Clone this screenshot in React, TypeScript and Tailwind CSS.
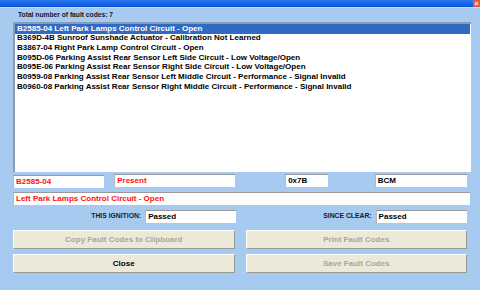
const CODES = [
  'B2585-04 Left Park Lamps Control Circuit - Open',
  'B369D-4B Sunroof Sunshade Actuator - Calibration Not Learned',
  'B3867-04 Right Park Lamp Control Circuit - Open',
  'B095D-06 Parking Assist Rear Sensor Left Side Circuit - Low Voltage/Open',
  'B095E-06 Parking Assist Rear Sensor Right Side Circuit - Low Voltage/Open',
  'B0959-08 Parking Assist Rear Sensor Left Middle Circuit - Performance - Signal Invalid',
  'B0960-08 Parking Assist Rear Sensor Right Middle Circuit - Performance - Signal Invalid',
]

function Field({ value, red, className }: { value: string; red?: boolean; className: string }) {
  return (
    <div
      className={`flex h-[13px] items-center border-t border-l border-t-[#9a9a9a] border-l-[#b8b8b8] bg-white pl-[2px] text-[8px] leading-none ${
        red ? 'text-[#ff1010]' : 'text-black'
      } ${className}`}
    >
      {value}
    </div>
  )
}

function Button({ label, disabled }: { label: string; disabled?: boolean }) {
  return (
    <div
      className={`flex h-[19px] w-[224px] items-center justify-center border-t border-l border-r border-b border-t-white border-l-white border-r-[#9c9a94] border-b-[#9c9a94] bg-[#ece9d8] text-[8px] ${
        disabled ? 'text-[#a8a69c]' : 'text-black'
      }`}
    >
      {label}
    </div>
  )
}

export default function App() {
  return (
    <div
      className="flex h-[290px] w-[480px] flex-col overflow-hidden bg-[#a6caf0] font-bold"
      style={{ fontFamily: '"Liberation Sans", Arial, sans-serif' }}
    >
      {/* title bar */}
      <div className="flex h-[7px] justify-end bg-gradient-to-b from-[#2a78f0] to-[#0a52dc]">
        <div className="flex h-[7px] w-[7px] items-center justify-center bg-[#e2583e] text-[7px] leading-none text-white">
          ×
        </div>
      </div>
      <div className="h-[1px] bg-[#c6dcf6]" />

      <div className="flex h-[14px] items-center pl-[18px] text-[6.7px] leading-none text-[#101828]">
        Total number of fault codes: 7
      </div>

      <div className="mx-[13px] h-[150px] w-[458px] border-t-2 border-l-2 border-t-[#8a9cb4] border-l-[#8a9cb4] bg-white">
        {CODES.map((c, i) => (
          <div
            key={c}
            className={`flex h-[9.67px] items-center pl-[2px] text-[8px] leading-none whitespace-nowrap ${
              i === 0 ? 'mr-[1px] bg-[#316ac5] text-white' : 'text-black'
            }`}
          >
            {c}
          </div>
        ))}
      </div>

      <div className="mt-[2px] flex items-start px-[13px]">
        <Field value="B2585-04" red className="mt-[1px] w-[92px]" />
        <Field value="Present" red className="ml-[10px] w-[122px]" />
        <Field value="0x7B" className="ml-[50px] w-[43px]" />
        <Field value="BCM" className="ml-[47px] w-[93px]" />
      </div>

      <div className="mt-[4px] px-[13px]">
        <Field value="Left Park Lamps Control Circuit - Open" red className="w-[457px]" />
      </div>

      <div className="mt-[5px] flex items-center px-[13px]">
        <div className="w-[133px] pr-[4px] text-right text-[6.8px] text-[#141c30]">THIS IGNITION:</div>
        <Field value="Passed" className="w-[91px]" />
        <div className="w-[141px] pr-[4px] text-right text-[6.8px] text-[#141c30]">SINCE CLEAR:</div>
        <Field value="Passed" className="w-[92px]" />
      </div>

      <div className="mt-[7px] flex gap-[11px] px-[13px]">
        <Button label="Copy Fault Codes to Clipboard" disabled />
        <Button label="Print Fault Codes" disabled />
      </div>
      <div className="mt-[5px] flex gap-[11px] px-[13px]">
        <Button label="Close" />
        <Button label="Save Fault Codes" disabled />
      </div>
    </div>
  )
}
